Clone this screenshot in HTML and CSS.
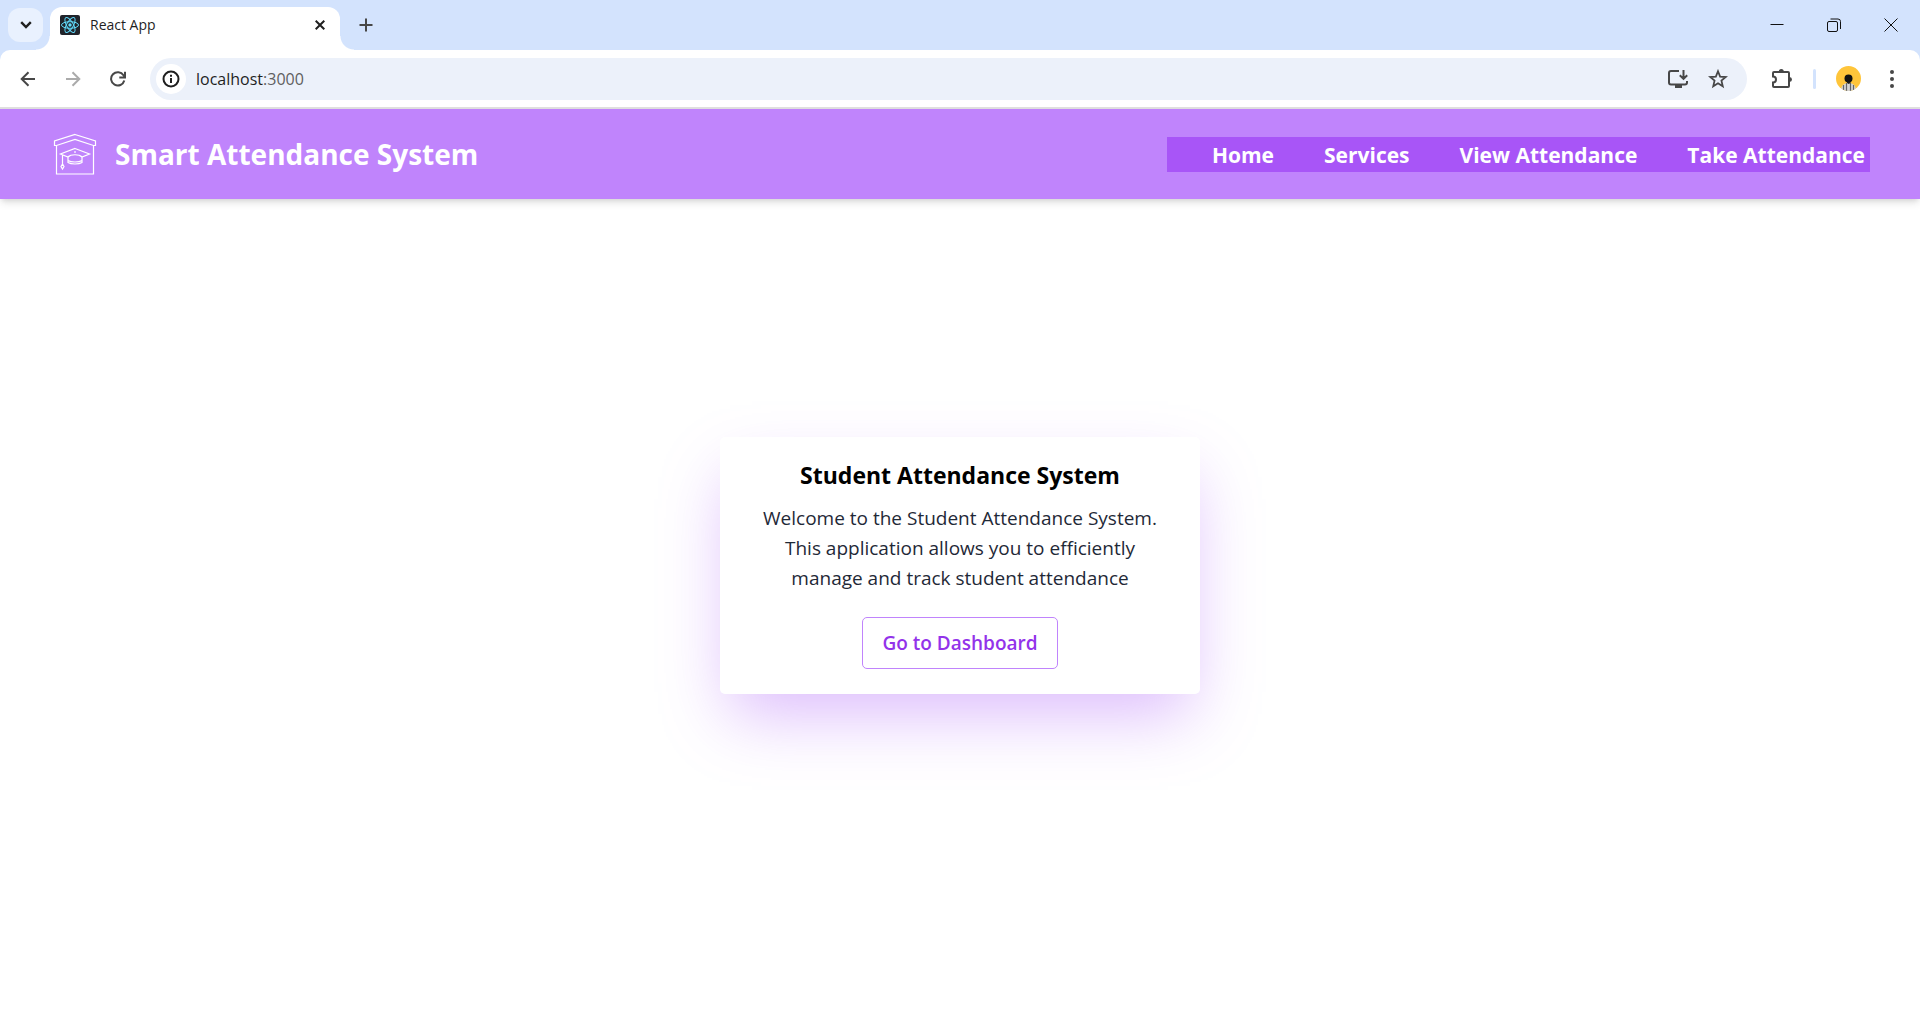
FILE: index.html
```html
<!DOCTYPE html>
<html lang="en">
<head>
<meta charset="utf-8">
<title>React App</title>
<link rel="stylesheet" href="styles.css">
</head>
<body>
<div class="browser">
  <div class="tabstrip">
    <button class="tab-search" type="button" aria-label="Search tabs">
      <svg width="12" height="8" viewBox="0 0 12 8" fill="none" stroke="#1f1f1f" stroke-width="2.4"><path d="M1.2 1.2 6 6l4.800-4.800"/></svg>
    </button>
    <div class="tab">
      <svg class="favicon" width="20" height="20" viewBox="0 0 20 20" fill="none" stroke="#61dafb" stroke-width="1"><rect width="20" height="20" rx="2" fill="#20232a" stroke="none"/><ellipse cx="10" cy="10" rx="8.500" ry="3.300"/><ellipse cx="10" cy="10" rx="8.500" ry="3.300" transform="rotate(60 10 10)"/><ellipse cx="10" cy="10" rx="8.500" ry="3.300" transform="rotate(120 10 10)"/><circle cx="10" cy="10" r="1.700" fill="#61dafb" stroke="none"/></svg>
      <span class="tab-title">React App</span>
      <button class="icon-button" type="button" aria-label="Close tab">
        <svg width="10" height="10" viewBox="0 0 10 10" stroke="#1f1f1f" stroke-width="2"><path d="m.7.7 8.600 8.600M9.300.7.7 9.300"/></svg>
      </button>
    </div>
    <button class="icon-button new-tab" type="button" aria-label="New tab">
      <svg width="14" height="14" viewBox="0 0 14 14" stroke="#474747" stroke-width="2"><path d="M7 .5v13M.5 7h13"/></svg>
    </button>
    <div class="window-controls">
      <button class="window-button" type="button" aria-label="Minimize">
        <svg width="14" height="14" viewBox="0 0 14 14" stroke="#111"><path d="M.5 6.500h13"/></svg>
      </button>
      <button class="window-button" type="button" aria-label="Restore">
        <svg width="14" height="14" viewBox="0 0 14 14" fill="none" stroke="#111"><rect x=".5" y="3.500" width="10" height="10" rx="1.500"/><path d="M3.500 1H11a2.500 2.500 0 0 1 2.500 2.500V11"/></svg>
      </button>
      <button class="window-button" type="button" aria-label="Close">
        <svg width="14" height="14" viewBox="0 0 14 14" stroke="#111"><path d="m.5.5 13 13M13.500.5l-13 13"/></svg>
      </button>
    </div>
  </div>

  <div class="toolbar">
    <div class="nav-buttons">
      <button class="icon-button" type="button" aria-label="Back">
        <svg width="16" height="16" viewBox="0 0 16 16" fill="none" stroke="#474747" stroke-width="2"><path d="M15 8H2M8.500 1.200 1.700 8l6.800 6.800"/></svg>
      </button>
      <button class="icon-button" type="button" aria-label="Forward">
        <svg width="16" height="16" viewBox="0 0 16 16" fill="none" stroke="#ababab" stroke-width="2"><path d="M1 8h13M7.500 1.200 14.300 8l-6.800 6.800"/></svg>
      </button>
      <button class="icon-button" type="button" aria-label="Reload">
        <svg width="16" height="16" viewBox="0 0 16 16" fill="none" stroke="#474747" stroke-width="2"><path d="M14.300 9.500A6.700 6.700 0 1 1 13.500 4.300L14.500 6"/><path d="M15 .8V6.500H9.300"/></svg>
      </button>
    </div>
    <div class="address-bar">
      <button class="site-info" type="button" aria-label="Site information">
        <svg width="18" height="18" viewBox="0 0 18 18" fill="none" stroke="#1f1f1f" stroke-width="2"><circle cx="9" cy="9" r="7.500"/><path d="M9 8v5M9 4.800v2"/></svg>
      </button>
      <a class="address" href="#">localhost<span class="port">:3000</span></a>
      <button class="icon-button" type="button" aria-label="Install app">
        <svg width="20" height="18" viewBox="0 0 20 18" fill="none" stroke="#474747" stroke-width="2"><path d="M11 1H3a2 2 0 0 0-2 2v9.500a2 2 0 0 0 2 2h14a2 2 0 0 0 2-2V11M15.500 0v8.500M11.800 5.200l3.700 3.700 3.700-3.700"/><path d="M7 14.500h7V18H7z" fill="#474747" stroke="none"/></svg>
      </button>
      <button class="icon-button" type="button" aria-label="Bookmark this page">
        <svg width="20" height="20" viewBox="0 0 18 18" fill="none" stroke="#474747" stroke-width="1.600"><path d="m9 2 1.900 4.800 5.100.4-3.900 3.300 1.200 5.100L9 12.900l-4.300 2.700 1.200-5.100L2 7.200l5.100-.4z"/></svg>
      </button>
    </div>
    <div class="toolbar-actions">
      <button class="icon-button" type="button" aria-label="Extensions">
        <svg width="22" height="22" viewBox="0 0 22 22" fill="none" stroke="#474747" stroke-width="2"><path d="M3.500 4H17a1 1 0 0 1 1 1v13a1 1 0 0 1-1 1H3a1 1 0 0 1-1-1v-3.500a3 3 0 0 0 0-6V5a1 1 0 0 1 1-1z"/><path d="M7.800 3.500a2.500 2.500 0 0 1 5 0zM18.500 9a2.500 2.500 0 0 1 0 5z" fill="#474747" stroke="none"/></svg>
      </button>
      <span class="divider"></span>
      <button class="icon-button" type="button" aria-label="Profile">
        <svg width="25" height="25" viewBox="0 0 25 25"><defs><clipPath id="face"><circle cx="12.500" cy="12.500" r="12.500"/></clipPath></defs><g clip-path="url(#face)"><path d="M0 0h25v25H0z" fill="#ffc53a"/><path d="M5 25q0-8 7.500-8t7.500 8z" fill="#d5d5d5"/><path d="M7.500 19v6M10.500 17v8M14.500 17v8M17.500 19v6" stroke="#666" stroke-width="1.200"/><path d="M11 14h3.500v3l-1.800 1L11 17z" fill="#222"/><circle cx="12.500" cy="12.500" r="4" fill="#111"/></g></svg>
      </button>
      <button class="icon-button" type="button" aria-label="Menu">
        <svg width="4" height="18" viewBox="0 0 4 18" fill="#474747"><circle cx="2" cy="2" r="2"/><circle cx="2" cy="9" r="2"/><circle cx="2" cy="16" r="2"/></svg>
      </button>
    </div>
  </div>
</div>

<header class="site-header">
  <a class="brand" href="#">
    <svg width="50" height="50" viewBox="0 0 50 50" fill="none" stroke="#fff" stroke-width="1.200"><path d="M25 5.500 45.500 12v4.500h-2L25 10.500 6.500 16.500h-2V12zM6.500 16.500V45h37V16.500"/><path d="m25 19.500 14.500 5.500-7.500 3c-3-3-11-3-14 0l-7.500-3zM18 27.500v6c3 2 11 2 14 0v-6M18 31.500c3 2 11 2 14 0M25 22v2M12.500 26v9M12.500 35l-1.500 2.500 1.500 2.500 1.500-2.500z"/></svg>
    <span>Smart Attendance System</span>
  </a>
  <nav class="site-nav">
    <a href="#">Home</a>
    <a href="#">Services</a>
    <a href="#">View Attendance</a>
    <a href="#">Take Attendance</a>
  </nav>
</header>

<main class="content">
  <section class="card">
    <h1>Student Attendance System</h1>
    <p>Welcome to the Student Attendance System. This application allows you to efficiently manage and track student attendance</p>
    <button class="dashboard-button" type="button">Go to Dashboard</button>
  </section>
</main>
</body>
</html>
```

FILE: styles.css
```css
* {
  box-sizing: border-box;
}

body {
  display: flex;
  flex-direction: column;
  min-height: 100vh;
  margin: 0;
  background: #fff;
  font-family: "Open Sans", "Noto Sans", sans-serif;
}

button {
  padding: 0;
  border: 0;
  background: none;
  font-family: inherit;
  cursor: pointer;
}

svg {
  display: block;
  flex: none;
}

a {
  color: inherit;
  text-decoration: none;
}

/* Browser frame */

.browser {
  border-bottom: 2px solid #dfdfdf;
  background: #d3e3fd;
}

.tabstrip {
  display: flex;
  align-items: center;
  height: 50px;
  padding: 0 1px 0 8px;
}

.tab-search {
  display: grid;
  place-items: center;
  width: 35px;
  height: 34px;
  border-radius: 12px;
  background: #e9f1fe;
}

.tab {
  position: relative;
  display: flex;
  align-items: center;
  align-self: flex-end;
  width: 290px;
  height: 43px;
  margin-left: 7px;
  padding: 0 5px 7px 10px;
  border-radius: 12px 12px 0 0;
  background: #fff;
}

.tab::before,
.tab::after {
  content: "";
  position: absolute;
  bottom: 0;
  width: 14px;
  height: 14px;
}

.tab::before {
  right: 100%;
  background: radial-gradient(circle at 0 0, transparent 13px, #fff 14px);
}

.tab::after {
  left: 100%;
  background: radial-gradient(circle at 100% 0, transparent 13px, #fff 14px);
}

.tab-title {
  flex: 1;
  margin-left: 10px;
  color: #1f1f1f;
  font-size: 14px;
  line-height: 20px;
}

.icon-button {
  display: grid;
  place-items: center;
  flex: none;
  width: 30px;
  height: 30px;
}

.new-tab {
  margin-left: 11px;
}

.window-controls {
  display: flex;
  margin-left: auto;
}

.window-button {
  display: grid;
  place-items: center;
  width: 57px;
  height: 50px;
}

.toolbar {
  display: flex;
  align-items: center;
  height: 57px;
  padding: 0 13px;
  border-radius: 10px 10px 0 0;
  background: #fff;
}

.nav-buttons {
  display: flex;
  gap: 15px;
}

.address-bar {
  display: flex;
  flex: 1;
  align-items: center;
  height: 42px;
  margin: 0 20px 0 17px;
  padding: 0 14px 0 6px;
  border-radius: 21px;
  background: #ecf1fa;
}

.address-bar .icon-button + .icon-button {
  margin-left: 10px;
}

.site-info {
  display: grid;
  place-items: center;
  width: 30px;
  height: 30px;
  border-radius: 50%;
  background: #fff;
}

.address {
  flex: 1;
  margin-left: 10px;
  color: #1f1f1f;
  font-size: 16px;
  line-height: 24px;
}

.port {
  color: #5f5f5f;
}

.toolbar-actions {
  display: flex;
  align-items: center;
}

.divider {
  width: 3px;
  height: 20px;
  margin: 0 17px 0 16px;
  border-radius: 2px;
  background: #d3e3fd;
}

.toolbar-actions .icon-button:last-child {
  margin-left: 14px;
}

/* Site header */

.site-header {
  display: flex;
  align-items: center;
  justify-content: space-between;
  padding: 20px 50px;
  background: #c084fc;
  box-shadow: 0 5px 8px -1px rgba(0, 0, 0, 0.1), 0 3px 5px -2px rgba(0, 0, 0, 0.1);
  color: #fff;
  font-weight: 700;
}

.brand {
  display: flex;
  align-items: center;
  gap: 15px;
  font-size: 28px;
  line-height: 40px;
}

.site-nav {
  display: flex;
  gap: 50px;
  padding: 1px 5px 0 45px;
  background: #a855f7;
  font-size: 21px;
  line-height: 34px;
}

/* Welcome card */

.content {
  display: flex;
  flex: 1;
  align-items: center;
  justify-content: center;
  padding-bottom: 88px;
}

.card {
  display: flex;
  flex-direction: column;
  align-items: center;
  width: 480px;
  padding: 23px 40px 25px;
  border-radius: 5px;
  background: #fff;
  box-shadow: 0 30px 63px -10px rgba(168, 85, 247, 0.4);
  text-align: center;
}

.card h1 {
  margin: 0 0 13px;
  color: #000;
  font-size: 23px;
  font-weight: 700;
  line-height: 30px;
}

.card p {
  margin: 0 0 24px;
  color: #1f2937;
  font-size: 19px;
  line-height: 30px;
}

.dashboard-button {
  padding: 10px 19px;
  border: 1px solid #c084fc;
  border-radius: 5px;
  color: #9333ea;
  font-size: 19px;
  font-weight: 600;
  line-height: 30px;
}
```
